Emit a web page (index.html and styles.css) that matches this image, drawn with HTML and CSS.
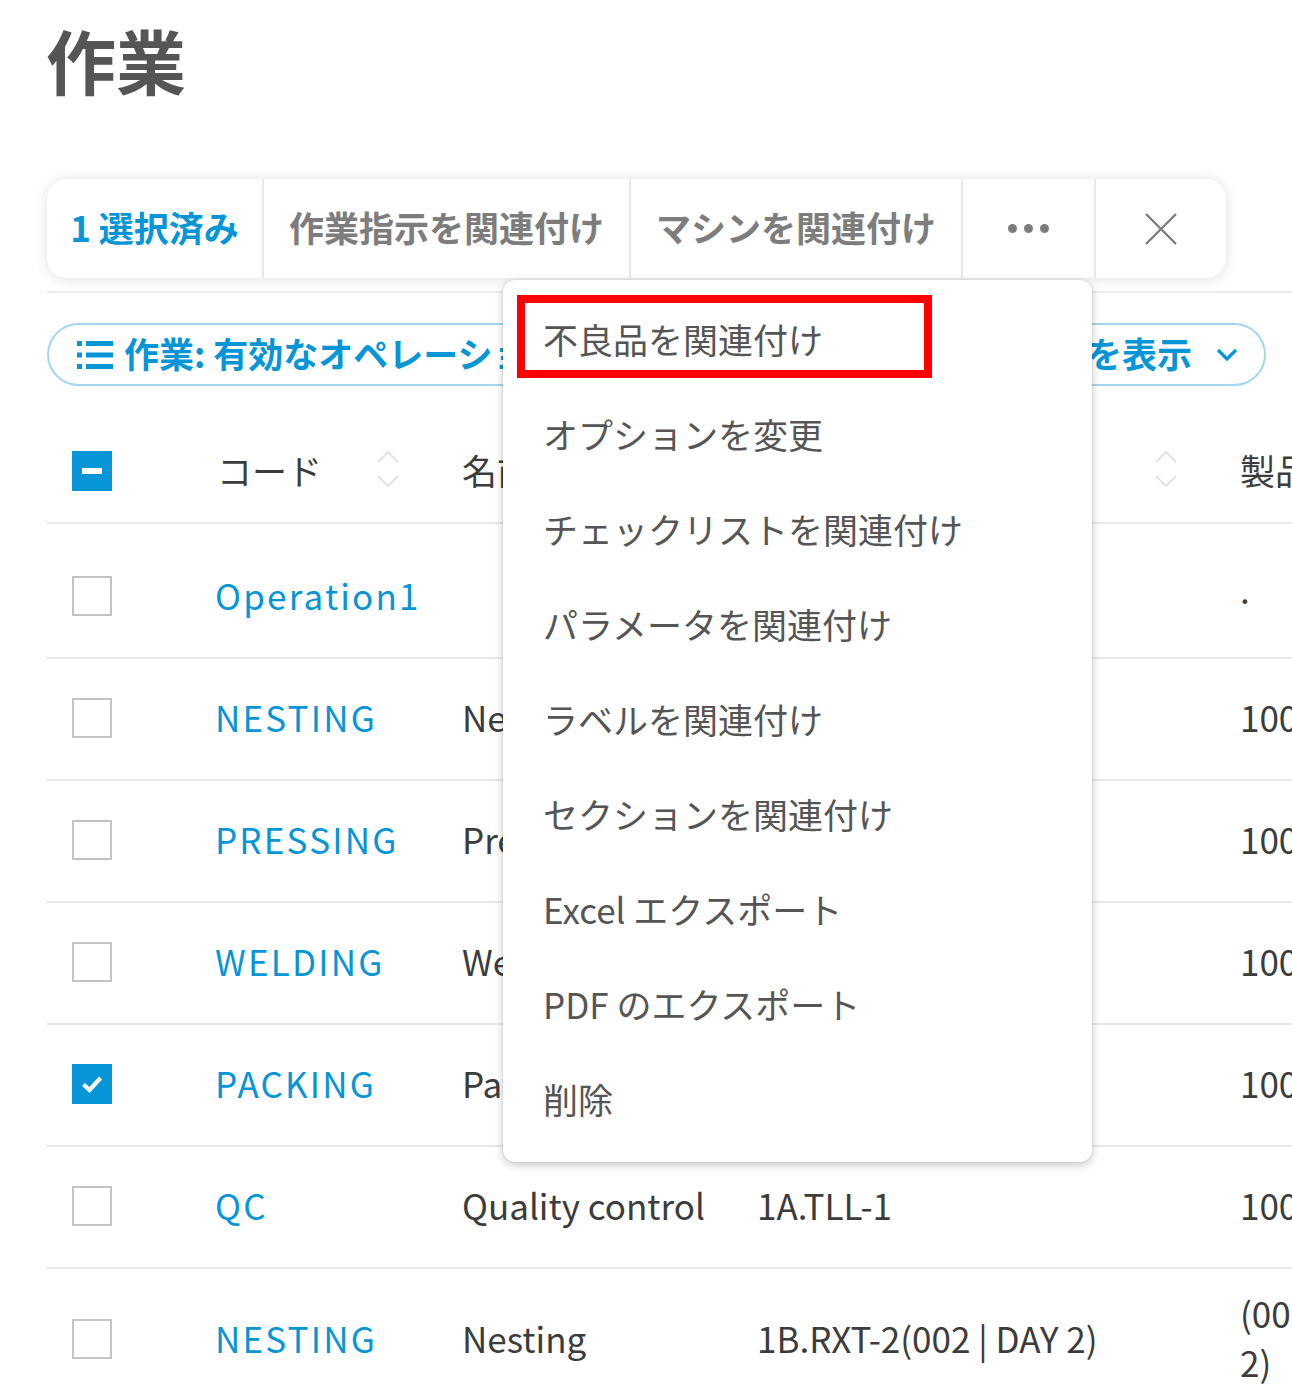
FILE: index.html
```html
<!DOCTYPE html>
<html lang="ja">
<head>
<meta charset="utf-8">
<title>作業</title>
<link rel="stylesheet" href="styles.css">
</head>
<body>
<div class="page">
  <h1 class="title">作業</h1>

  <div class="toolbar">
    <div class="seg seg-blue seg-1">1 選択済み</div>
    <div class="seg seg-2">作業指示を関連付け</div>
    <div class="seg seg-3">マシンを関連付け</div>
    <div class="seg seg-more"><span class="dot"></span><span class="dot"></span><span class="dot"></span></div>
    <div class="seg seg-close">
      <svg width="32" height="32" viewBox="0 0 32 32"><path d="M1 1 L31 31 M31 1 L1 31" stroke="#7d7d7d" stroke-width="2.4" fill="none"/></svg>
    </div>
  </div>

  <div class="divider"></div>

  <div class="filter">
    <div class="filter-left">
      <svg class="list-icon" width="36" height="30" viewBox="0 0 36 30"><rect x="0" y="1" width="5" height="5" fill="#0696d7"/><rect x="9" y="1" width="27" height="5" fill="#0696d7"/><rect x="0" y="12.5" width="5" height="5" fill="#0696d7"/><rect x="9" y="12.5" width="27" height="5" fill="#0696d7"/><rect x="0" y="24" width="5" height="5" fill="#0696d7"/><rect x="9" y="24" width="27" height="5" fill="#0696d7"/></svg>
      <span>作業: 有効なオペレーション ・ 全ての列を表示</span>
    </div>
    <div class="filter-right">
      <span>を表示</span>
      <svg width="22" height="14" viewBox="0 0 22 14"><path d="M2 2 L11 11 L20 2" stroke="#0696d7" stroke-width="3.2" fill="none"/></svg>
    </div>
  </div>

  <div class="table">
    <div class="row head">
      <div class="cell c-check"><span class="cb cb-ind"></span></div>
      <div class="cell c-code"><span>コード</span><svg class="sort" width="24" height="40" viewBox="0 0 24 40"><path d="M2 13 L12 3 L22 13 M2 27 L12 37 L22 27" stroke="#e3e3e3" stroke-width="2" fill="none"/></svg></div>
      <div class="cell c-name"><span>名前</span></div>
      <div class="cell c-wo"><span>作業指示</span><svg class="sort" width="24" height="40" viewBox="0 0 24 40"><path d="M2 13 L12 3 L22 13 M2 27 L12 37 L22 27" stroke="#e3e3e3" stroke-width="2" fill="none"/></svg></div>
      <div class="cell c-prod">製品</div>
    </div>

    <div class="row first">
      <div class="cell c-check"><span class="cb"></span></div>
      <div class="cell c-code code">Operation1</div>
      <div class="cell c-name"></div>
      <div class="cell c-wo"></div>
      <div class="cell c-prod prod-dot">.</div>
    </div>

    <div class="row">
      <div class="cell c-check"><span class="cb"></span></div>
      <div class="cell c-code code">NESTING</div>
      <div class="cell c-name">Nesting</div>
      <div class="cell c-wo">1A.TLL-1</div>
      <div class="cell c-prod">100</div>
    </div>

    <div class="row">
      <div class="cell c-check"><span class="cb"></span></div>
      <div class="cell c-code code">PRESSING</div>
      <div class="cell c-name">Pressing</div>
      <div class="cell c-wo">1A.TLL-1</div>
      <div class="cell c-prod">100</div>
    </div>

    <div class="row">
      <div class="cell c-check"><span class="cb"></span></div>
      <div class="cell c-code code">WELDING</div>
      <div class="cell c-name">Welding</div>
      <div class="cell c-wo">1A.TLL-1</div>
      <div class="cell c-prod">100</div>
    </div>

    <div class="row">
      <div class="cell c-check"><span class="cb cb-on"><svg width="22" height="18" viewBox="0 0 22 18"><path d="M2.5 9.5 L8.5 15 L19.5 3" stroke="#fff" stroke-width="4.2" fill="none"/></svg></span></div>
      <div class="cell c-code code">PACKING</div>
      <div class="cell c-name">Packing</div>
      <div class="cell c-wo">1A.TLL-1</div>
      <div class="cell c-prod">100</div>
    </div>

    <div class="row">
      <div class="cell c-check"><span class="cb"></span></div>
      <div class="cell c-code code">QC</div>
      <div class="cell c-name">Quality control</div>
      <div class="cell c-wo">1A.TLL-1</div>
      <div class="cell c-prod">100</div>
    </div>

    <div class="row last">
      <div class="cell c-check"><span class="cb"></span></div>
      <div class="cell c-code code">NESTING</div>
      <div class="cell c-name">Nesting</div>
      <div class="cell c-wo">1B.RXT-2(002 | DAY 2)</div>
      <div class="cell c-prod">(002 | DAY 2)</div>
    </div>
  </div>

  <div class="menu">
    <div class="menu-item">不良品を関連付け</div>
    <div class="menu-item">オプションを変更</div>
    <div class="menu-item">チェックリストを関連付け</div>
    <div class="menu-item">パラメータを関連付け</div>
    <div class="menu-item">ラベルを関連付け</div>
    <div class="menu-item">セクションを関連付け</div>
    <div class="menu-item">Excel エクスポート</div>
    <div class="menu-item">PDF のエクスポート</div>
    <div class="menu-item">削除</div>
    <div class="highlight"></div>
  </div>
</div>
</body>
</html>
```

FILE: styles.css
```css
* { box-sizing: border-box; }

html, body {
  margin: 0;
  padding: 0;
  background: #fff;
}

body {
  font-family: "Noto Sans CJK JP", "Noto Sans", sans-serif;
  color: #3c3c3c;
  width: 1292px;
  height: 1396px;
  overflow: hidden;
}

.page {
  position: relative;
  padding-left: 47px;
  display: flex;
  flex-direction: column;
  width: 1292px;
}

.title {
  margin: 14px 0 0 0;
  font-size: 70px;
  line-height: 92px;
  font-weight: 700;
  color: #555;
  margin-left: -1px;
}

/* toolbar */
.toolbar {
  margin-top: 73px;
  width: 1179px;
  height: 99px;
  display: flex;
  background: #fff;
  border-radius: 20px;
  box-shadow: 0 1px 14px rgba(0, 0, 0, 0.13);
}

.seg {
  display: flex;
  align-items: center;
  justify-content: center;
  font-size: 35px;
  font-weight: 700;
  color: #7d7d7d;
  border-left: 2px solid #e8e8e8;
  white-space: nowrap;
  flex: none;
  padding-bottom: 4px;
}

.seg-1 { width: 215px; border-left: none; }
.seg-2 { width: 367px; }
.seg-3 { width: 332px; }
.seg-more { width: 133px; gap: 7px; padding-bottom: 0; }
.seg-close { flex: 1; padding-bottom: 0; }

.seg-blue { color: #0696d7; }

.dot {
  width: 9px;
  height: 9px;
  border-radius: 50%;
  background: #7d7d7d;
}

.divider {
  margin-top: 13px;
  height: 2px;
  background: #ececec;
  width: 1245px;
}

/* filter */
.filter {
  margin-top: 30px;
  width: 1219px;
  height: 63px;
  border: 2px solid #a4d6f0;
  border-radius: 32px;
  display: flex;
  align-items: center;
  justify-content: space-between;
  padding: 0 26px 0 28px;
  color: #0696d7;
  font-size: 35px;
  font-weight: 700;
  overflow: hidden;
}

.filter-left {
  display: flex;
  align-items: center;
  gap: 11px;
  white-space: nowrap;
  overflow: hidden;
  flex: 1;
}

.filter-left span, .filter-right span {
  padding-bottom: 5px;
}

.list-icon { flex: none; }

.filter-right {
  display: flex;
  align-items: center;
  gap: 24px;
  white-space: nowrap;
  flex: none;
}

/* table */
.table {
  margin-top: 36px;
  display: flex;
  flex-direction: column;
  width: 1245px;
}

.row {
  display: grid;
  grid-template-columns: 168px 247px 295px 483px 200px;
  align-items: center;
  min-height: 122px;
  border-bottom: 2px solid #e8e8e8;
  font-size: 35px;
  line-height: 49px;
}

.row.head { min-height: 102px; }
.row.first { min-height: 135px; padding-top: 13px; }
.row.last { min-height: 142px; border-bottom: none; }

.cell {
  white-space: nowrap;
  overflow: hidden;
}

.c-code, .c-name, .c-wo, .c-prod { padding-bottom: 6px; }

.c-check {
  padding-left: 25px;
  display: flex;
  align-items: center;
  padding-bottom: 2px;
}

.cb {
  width: 40px;
  height: 40px;
  border: 2px solid #c4c4c4;
  display: flex;
  align-items: center;
  justify-content: center;
  background: #fff;
}

.cb-ind, .cb-on {
  border: none;
  background: #0696d7;
}

.cb-ind::after {
  content: "";
  width: 20px;
  height: 6px;
  background: #fff;
}

.head .cell { color: #3c3c3c; }

.head .c-code, .head .c-wo {
  display: flex;
  align-items: center;
  justify-content: space-between;
  padding-right: 62px;
}

.head .c-code { padding-left: 2px; }

.code {
  color: #0696d7;
  letter-spacing: 2.2px;
}

.c-prod { overflow: visible; }

.prod-dot { position: relative; top: -6px; }

.last .c-prod {
  white-space: normal;
  width: 190px;
  overflow: visible;
}

/* dropdown menu */
.menu {
  position: absolute;
  left: 503px;
  top: 280px;
  width: 589px;
  height: 882px;
  background: #fff;
  border-radius: 12px;
  box-shadow: 0 3px 10px rgba(0, 0, 0, 0.22), 0 0 2px rgba(0, 0, 0, 0.15);
  padding: 13px 0;
  display: flex;
  flex-direction: column;
}

.menu-item {
  height: 95px;
  display: flex;
  align-items: center;
  padding-left: 40px;
  padding-bottom: 4px;
  font-size: 35px;
  color: #555;
  white-space: nowrap;
}

.highlight {
  position: absolute;
  left: 14px;
  top: 15px;
  width: 415px;
  height: 83px;
  border: 8px solid #ff0000;
}
```
